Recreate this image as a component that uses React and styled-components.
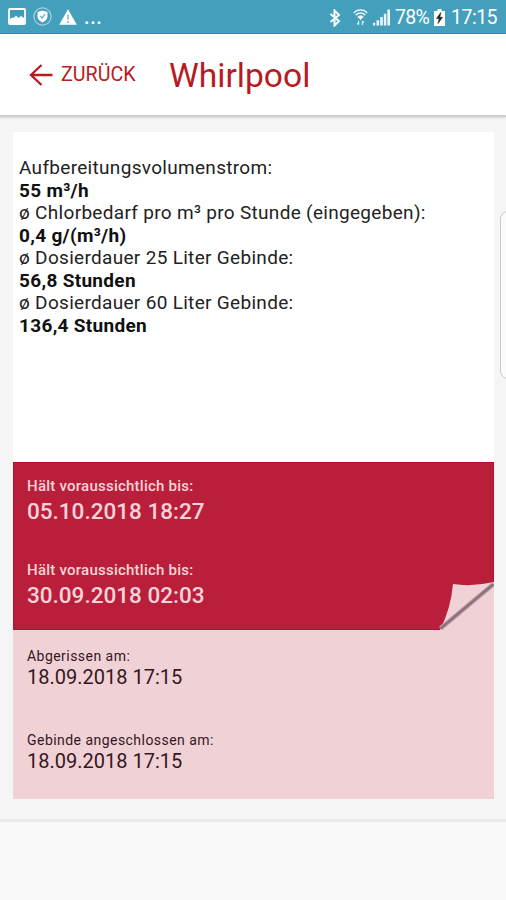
import React from 'react'
import styled, { createGlobalStyle } from 'styled-components'

const details = [
    { label: 'Aufbereitungsvolumenstrom:', value: '55 m³/h' },
    { label: 'ø Chlorbedarf pro m³ pro Stunde (eingegeben):', value: '0,4 g/(m³/h)' },
    { label: 'ø Dosierdauer 25 Liter Gebinde:', value: '56,8 Stunden' },
    { label: 'ø Dosierdauer 60 Liter Gebinde:', value: '136,4 Stunden' },
]

const forecasts = [
    { label: 'Hält voraussichtlich bis:', date: '05.10.2018 18:27' },
    { label: 'Hält voraussichtlich bis:', date: '30.09.2018 02:03' },
]

const events = [
    { label: 'Abgerissen am:', date: '18.09.2018 17:15' },
    { label: 'Gebinde angeschlossen am:', date: '18.09.2018 17:15' },
]

function PictureIcon() {
    return (
        <svg width="18" height="17" viewBox="0 0 18 17">
            <rect x="1" y="1" width="16" height="15" rx="1" fill="none" stroke="#fff" strokeWidth="1.8" />
            <path d="M2 2h14v7l-3-2-2 2-4-3-3 4H2z" fill="#419bb9" />
            <path d="M2 15v-4l2-1.500 1.500.5L8 7.500l2.500 2.500 2.500-2 3 2v5z" fill="#fff" />
        </svg>
    )
}

function ShieldIcon() {
    return (
        <svg width="19" height="19" viewBox="0 0 19 19">
            <circle cx="9.500" cy="9.500" r="8.600" fill="none" stroke="#a9d3e1" strokeWidth="1.200" />
            <path d="M9.500 3.600l5 1.500v4.100c0 3-2.200 4.900-5 6.200-2.800-1.300-5-3.200-5-6.200V5.100z" fill="#fff" />
            <path d="M7.200 8.900l1.900 2 2.900-3.700" fill="none" stroke="#65b3cd" strokeWidth="1.300" />
        </svg>
    )
}

function WarningIcon() {
    return (
        <svg width="18" height="16" viewBox="0 0 18 16">
            <path d="M9 .3L17.800 15.800H.2z" fill="#fff" />
            <path d="M9 5.500v5M9 12v2" stroke="#8fb9c8" strokeWidth="1.700" />
        </svg>
    )
}

function BluetoothIcon() {
    return (
        <svg width="12" height="18" viewBox="0 0 12 18">
            <path d="M1.500 5l8.500 7-4.500 4.500v-15L10 6l-8.500 7" fill="none" stroke="#fff" strokeWidth="2" />
        </svg>
    )
}

function WifiIcon() {
    return (
        <svg width="15" height="19" viewBox="0 0 16 19">
            <g fill="none" stroke="#e4f3f8" strokeWidth="1.700">
                <path d="M1 5C3 .3 13 .3 15 5" />
                <path d="M3 7c2.800-3 7.200-3 10 0" />
                <path d="M5 9.500c1.800-1.900 4.200-1.900 6 0" />
            </g>
            <path d="M5.500 9h5L8 12.500z" fill="#fff" />
            <path d="M6 13v4M4.300 15.500L6 17.300M10 17.500v-4M11.700 15L10 13.200" fill="none" stroke="#d6edf5" strokeWidth="1.300" />
        </svg>
    )
}

function SignalIcon() {
    return (
        <svg width="17" height="17" viewBox="0 0 18 17">
            <path d="M0 14h2.300v3H0zM3.700 11.500H6.500V17H3.700zM7.600 8h2.800v9H7.600zM11.500 4.500h2.600V17h-2.600zM15.200 0H18v17h-2.800z" fill="#e8f5f9" />
        </svg>
    )
}

function BatteryIcon() {
    return (
        <svg width="11" height="17" viewBox="0 0 11 17">
            <path d="M3.500 0h4v2H11v15H0V2h3.500z" fill="#fff" />
            <path d="M6.800 3.500L2.500 9.500h2.700L4 14.500l4.500-6.200H5.800z" fill="#222" stroke="#222" strokeWidth=".6" />
        </svg>
    )
}

function BackArrow() {
    return (
        <svg width="24" height="24" viewBox="0 0 24 24">
            <path d="M12.500 2L2 12l10.500 10M2 12h21.500" fill="none" stroke="#b81b1f" strokeWidth="2.300" />
        </svg>
    )
}

function PageCurl() {
    return (
        <CurlSvg width="55" height="49" viewBox="0 0 55 49">
            <path d="M14 3Q33 6 55 1V49H1Q12 27 14 3z" fill="#f0d1d6" />
            <path d="M1.500 47.500L54.500 3" stroke="#c4a7af" strokeWidth="4.800" />
            <path d="M1.500 47.500L54.500 3" stroke="#8f707b" strokeWidth="2.800" />
        </CurlSvg>
    )
}

function App() {
    return (
        <Screen>
            <GlobalStyle />
            <StatusBar>
                <Notifications>
                    <PictureIcon />
                    <ShieldIcon />
                    <WarningIcon />
                    <More>...</More>
                </Notifications>
                <SystemIcons>
                    <BluetoothIcon />
                    <WifiIcon />
                    <SignalIcon />
                    <StatusText $width={34} $squeeze={-0.7}>78%</StatusText>
                    <BatteryIcon />
                    <StatusText $width={46} $squeeze={-0.5}>17:15</StatusText>
                </SystemIcons>
            </StatusBar>
            <Header>
                <BackButton>
                    <BackArrow />
                    <span>ZURÜCK</span>
                </BackButton>
                <Title>Whirlpool</Title>
            </Header>
            <Content>
                <Details>
                    {details.map((item) => (
                        <React.Fragment key={item.label}>
                            <dt>{item.label}</dt>
                            <dd>{item.value}</dd>
                        </React.Fragment>
                    ))}
                </Details>
                <Forecast>
                    {forecasts.map((item) => (
                        <Entry key={item.date}>
                            <ForecastLabel>{item.label}</ForecastLabel>
                            <ForecastDate>{item.date}</ForecastDate>
                        </Entry>
                    ))}
                    <PageCurl />
                </Forecast>
                <Events>
                    {events.map((item) => (
                        <Entry key={item.label}>
                            <EventLabel>{item.label}</EventLabel>
                            <EventDate>{item.date}</EventDate>
                        </Entry>
                    ))}
                </Events>
            </Content>
            <Footer />
            <EdgeHandle />
        </Screen>
    )
}

const GlobalStyle = createGlobalStyle`
  * {
    box-sizing: border-box;
    margin: 0;
    padding: 0;
  }

  body {
    font-family: Roboto, sans-serif;
    background: #f5f5f5;
  }

  svg {
    display: block;
    flex-shrink: 0;
  }
`;

const Screen = styled.div`
  position: relative;
  display: flex;
  flex-direction: column;
  width: 506px;
  height: 900px;
  overflow: hidden;
  background: #f5f5f5;
`;

const StatusBar = styled.div`
  display: flex;
  justify-content: space-between;
  height: 34px;
  padding: 0 9px 0 8px;
  background: #449fbd;
  border-bottom: 1px solid #2792b5;
  color: #fff;
`;

const Notifications = styled.div`
  display: flex;
  align-items: center;
  gap: 7px;
`;

const More = styled.span`
  font-size: 20px;
  font-weight: 500;
  line-height: 34px;
  letter-spacing: 0.6px;
`;

const SystemIcons = styled.div`
  display: flex;
  align-items: center;
  gap: 5px;
  padding-top: 2px;

  svg:first-child {
    margin-right: 7px;
  }

  span:last-child {
    margin-left: 1px;
  }
`;

const StatusText = styled.span`
  width: ${(props) => props.$width}px;
  font-size: 19.5px;
  line-height: 32px;
  letter-spacing: ${(props) => props.$squeeze}px;
  white-space: nowrap;
`;

const Header = styled.header`
  display: flex;
  align-items: center;
  height: 83px;
  padding-left: 29px;
  background: #fff;
  border-bottom: 2px solid #cfcfcf;
  box-shadow: 0 1px 2px rgba(0, 0, 0, 0.12);
  color: #b81b1f;
`;

const BackButton = styled.button`
  display: flex;
  align-items: center;
  gap: 8px;
  width: 140px;
  border: none;
  background: none;
  color: inherit;
  font-family: inherit;
  font-size: 19.7px;
  line-height: 24px;
`;

const Title = styled.h1`
  padding-top: 2px;
  font-size: 33.6px;
  font-weight: 400;
  line-height: 40px;
`;

const Content = styled.main`
  display: flex;
  flex-direction: column;
  height: 702px;
  padding: 15px 12px 0 13px;
`;

const Details = styled.dl`
  height: 330px;
  padding: 25px 6px 0;
  background: #fff;
  color: #222;
  font-size: 19px;
  line-height: 22.5px;
  letter-spacing: 0.31px;
  white-space: nowrap;

  dd {
    color: #111;
    font-weight: 700;
  }
`;

const Panel = styled.section`
  height: 168px;
  padding: 14px 14px 0;
`;

const Forecast = styled(Panel)`
  position: relative;
  background: #b91f3a;
  color: #fbd3d8;
  border: 1px solid #b5102d;
  padding: 13px 13px 0;
`;

const Events = styled(Panel)`
  height: 169px;
  padding-top: 16px;
  background: #f0d1d6;
  color: #35171f;
`;

const Entry = styled.div`
  height: 84px;
  white-space: nowrap;
`;

const ForecastLabel = styled.p`
  font-size: 15px;
  font-weight: 500;
  line-height: 20px;
  letter-spacing: 0.24px;
`;

const ForecastDate = styled.p`
  font-size: 22.5px;
  font-weight: 500;
  line-height: 30px;
`;

const EventLabel = styled.p`
  font-size: 14px;
  line-height: 20px;
  letter-spacing: 0.46px;
`;

const EventDate = styled.p`
  font-size: 20px;
  line-height: 22px;
`;

const CurlSvg = styled.svg`
  position: absolute;
  right: -1px;
  bottom: -1px;
`;

const Footer = styled.footer`
  flex: 1;
  border-top: 3px solid #e7e8e8;
  background: #f9f9f9;
`;

const EdgeHandle = styled.div`
  position: absolute;
  top: 211px;
  right: -10px;
  width: 16px;
  height: 168px;
  border: 1px solid #cacaca;
  border-radius: 8px;
  background: #fafafa;
`;

export default App;
